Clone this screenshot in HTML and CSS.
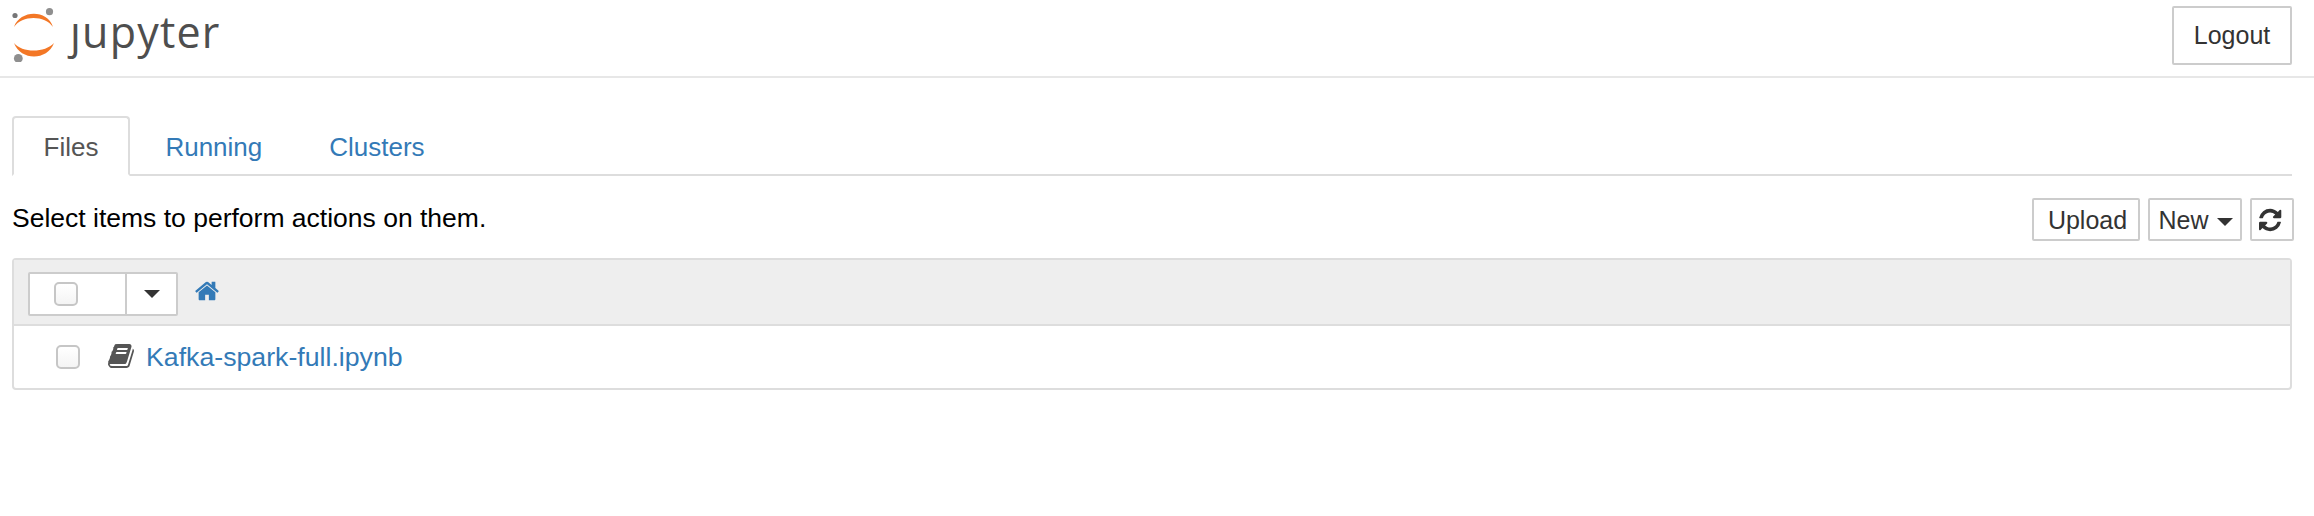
FILE: index.html
```html
<!DOCTYPE html>
<html lang="en">
<head>
    <meta charset="UTF-8">
    <title>Home</title>
    <link rel="stylesheet" href="styles.css">
</head>
<body>
    <div class="header">
        <div class="logo">
            <svg class="logo-mark" width="44" height="54" viewBox="12 8 44 54">
                <path fill="#f37726" d="M14 27C20 10 47 9 53 27C45 15 22 15 14 27Z"/>
                <path fill="#f37726" d="M14 43C21 61 47 61 54 43C45 53 22 53 14 43Z"/>
                <circle fill="#8f8f8f" cx="49.5" cy="11.7" r="3.6"/>
                <circle fill="#767677" cx="15" cy="15.5" r="2.6"/>
                <circle fill="#8f8f8f" cx="18.3" cy="58.4" r="4.4"/>
            </svg>
            <span class="logo-text">ȷupyter</span>
        </div>
        <button class="btn logout">Logout</button>
    </div>

    <div class="main">
        <ul class="tabs">
            <li class="tab active">Files</li>
            <li class="tab">Running</li>
            <li class="tab">Clusters</li>
        </ul>

        <div class="toolbar">
            <span class="hint">Select items to perform actions on them.</span>
            <div class="actions">
                <button class="btn small upload">Upload</button>
                <button class="btn small new">New <span class="caret"></span></button>
                <button class="btn small refresh">
                    <svg width="26" height="26" viewBox="0 0 1792 1792"><path fill="#333" d="M1511 1056q0 5-1 7-64 268-268 434.5t-478 166.5q-146 0-282.5-55t-243.5-157l-129 129q-19 19-45 19t-45-19-19-45v-448q0-26 19-45t45-19h448q26 0 45 19t19 45-19 45l-137 137q71 66 161 102t187 36q134 0 250-65t186-179q11-17 53-117 8-23 30-23h192q13 0 22.5 9.5t9.5 22.5zm25-800v448q0 26-19 45t-45 19h-448q-26 0-45-19t-19-45 19-45l138-138q-148-137-349-137-134 0-250 65t-186 179q-11 17-53 117-8 23-30 23h-199q-13 0-22.5-9.5t-9.5-22.5v-7q65-268 270-434.5t480-166.5q146 0 284 55.5t245 156.5l130-129q19-19 45-19t45 19 19 45z"/></svg>
                </button>
            </div>
        </div>

        <div class="panel">
            <div class="panel-head">
                <div class="select-group">
                    <div class="select-box"><input type="checkbox" class="check"></div>
                    <div class="select-drop"><span class="caret"></span></div>
                </div>
                <svg class="home" width="26" height="26" viewBox="0 0 1792 1792"><path fill="#337ab7" d="M1472 992v480q0 26-19 45t-45 19h-384v-384h-256v384h-384q-26 0-45-19t-19-45v-480q0-1 .5-3t.5-3l575-474 575 474q1 2 1 6zm223-69l-62 74q-8 9-21 11h-3q-13 0-21-7l-692-577-692 577q-12 8-24 7-13-2-21-11l-62-74q-8-10-7-23.5t11-21.5l719-599q32-26 76-26t76 26l244 204v-195q0-14 9-23t23-9h192q14 0 23 9t9 23v408l219 182q10 8 11 21.5t-7 23.5z"/></svg>
            </div>
            <div class="item">
                <input type="checkbox" class="check">
                <svg class="book" width="28" height="28" viewBox="0 0 1792 1792"><path fill="#555" d="M1703 478q40 57 18 129l-275 906q-19 64-76.5 107.5t-122.5 43.5h-923q-77 0-148.5-53.5t-99.5-131.5q-24-67-2-127 0-4 3-27t4-37q1-8-3-21.5t-3-19.5q2-11 8-21t16.5-23.5 16.5-23.5q23-38 45-91.5t30-91.5q3-10 .5-30t-.5-28q3-11 17-28t17-23q21-36 42-92t25-90q1-9-2.5-32t.5-28q4-13 22-30.5t22-22.5q19-26 42.5-84.5t27.5-96.5q1-8-3-25.5t-2-26.5q2-8 9-18t18-23 17-21q8-12 16.5-30.5t15-35 16-36 19.5-32 26.5-23.5 36-11.5 47.5 5.5l-1 3q38-9 51-9h761q74 0 114 56t18 130l-274 906q-36 119-71.5 153.5t-128.5 34.5h-869q-27 0-38 15-11 16-1 43 24 70 144 70h923q29 0 56-15.5t35-41.5l300-987q7-22 5-57 38 15 59 43zm-1064 2q-4 13 2 22.5t20 9.5h608q13 0 25.5-9.5t16.5-22.5l21-64q4-13-2-22.5t-20-9.5h-608q-13 0-25.5 9.5t-16.5 22.5zm-83 256q-4 13 2 22.5t20 9.5h608q13 0 25.5-9.5t16.5-22.5l21-64q4-13-2-22.5t-20-9.5h-608q-13 0-25.5 9.5t-16.5 22.5z"/></svg>
                <a class="item-link" href="#">Kafka-spark-full.ipynb</a>
            </div>
        </div>
    </div>
</body>
</html>
```

FILE: styles.css
```css
html, body {
    margin: 0;
    padding: 0;
    background: #fff;
    font-family: "Liberation Sans", Arial, sans-serif;
    font-size: 26px;
    color: #000;
}

/* top bar */
.header {
    display: flex;
    justify-content: space-between;
    align-items: flex-start;
    height: 78px;
    padding: 6px 22px 0 12px;
    box-sizing: border-box;
    border-bottom: 2px solid #e7e7e7;
}

.logo {
    display: flex;
    align-items: flex-start;
    gap: 14px;
    margin-top: 2px;
}

.logo-text {
    font-family: "Open Sans", sans-serif;
    font-size: 43px;
    letter-spacing: 1.2px;
    line-height: 50px;
    color: #4e4e4e;
    margin-top: -1px;
}

.btn {
    background: #fff;
    border: 2px solid #ccc;
    border-radius: 2px;
    color: #333;
    font-family: inherit;
    font-size: 25px;
    padding: 0;
    box-sizing: border-box;
}

.logout {
    width: 120px;
    height: 59px;
}

/* tabs */
.main {
    padding: 38px 22px 0 12px;
}

.tabs {
    display: flex;
    list-style: none;
    margin: 0;
    padding: 0;
    height: 60px;
    box-sizing: border-box;
    border-bottom: 2px solid #ddd;
}

.tab {
    padding: 0 29.5px;
    margin-right: 4px;
    line-height: 58px;
    height: 60px;
    box-sizing: border-box;
    color: #337ab7;
    border: 2px solid transparent;
    border-radius: 4px 4px 0 0;
}

.tab.active {
    color: #555;
    background: #fff;
    border-color: #ddd;
    border-bottom-color: #fff;
}

/* hint line and buttons */
.toolbar {
    display: flex;
    justify-content: space-between;
    align-items: flex-start;
    margin-top: 22px;
}

.hint {
    font-size: 26.5px;
    line-height: 40px;
}

.actions {
    display: flex;
    gap: 8px;
    margin-right: -2px;
}

.small {
    height: 43px;
    line-height: 38px;
}

.upload {
    width: 108px;
    padding-left: 3px;
}

.new {
    width: 94px;
    padding-left: 2px;
}

.refresh {
    width: 44px;
    display: flex;
    align-items: center;
    justify-content: center;
}

.caret {
    display: inline-block;
    width: 0;
    height: 0;
    margin-left: 2px;
    vertical-align: middle;
    border-top: 8px solid #333;
    border-left: 8px solid transparent;
    border-right: 8px solid transparent;
}

/* file list */
.panel {
    margin-top: 17px;
    border: 2px solid #ddd;
    border-radius: 4px;
}

.panel-head {
    display: flex;
    align-items: flex-start;
    gap: 16px;
    height: 66px;
    padding: 12px 0 0 14px;
    box-sizing: border-box;
    background: #eee;
    border-bottom: 2px solid #ddd;
}

.select-group {
    display: flex;
    height: 44px;
    box-sizing: border-box;
    background: #fff;
    border: 2px solid #ccc;
    border-radius: 2px;
}

.select-box {
    display: flex;
    align-items: center;
    width: 97px;
    padding-left: 24px;
    box-sizing: border-box;
    border-right: 2px solid #ccc;
}

.select-drop {
    display: flex;
    align-items: center;
    justify-content: center;
    width: 49px;
}

.select-drop .caret {
    margin-left: 0;
}

.home {
    margin-top: 6px;
}

.item {
    display: flex;
    align-items: center;
    height: 62px;
    padding-left: 42px;
    box-sizing: border-box;
}

.check {
    appearance: none;
    width: 24px;
    height: 24px;
    margin: 0;
    box-sizing: border-box;
    background: linear-gradient(#fff, #f4f4f4);
    border: 2px solid #c6c6c6;
    border-radius: 5px;
}

.book {
    margin-left: 27px;
    margin-top: -3px;
}

.item-link {
    margin-left: 11px;
    font-size: 26.7px;
    color: #337ab7;
    text-decoration: none;
}
```
